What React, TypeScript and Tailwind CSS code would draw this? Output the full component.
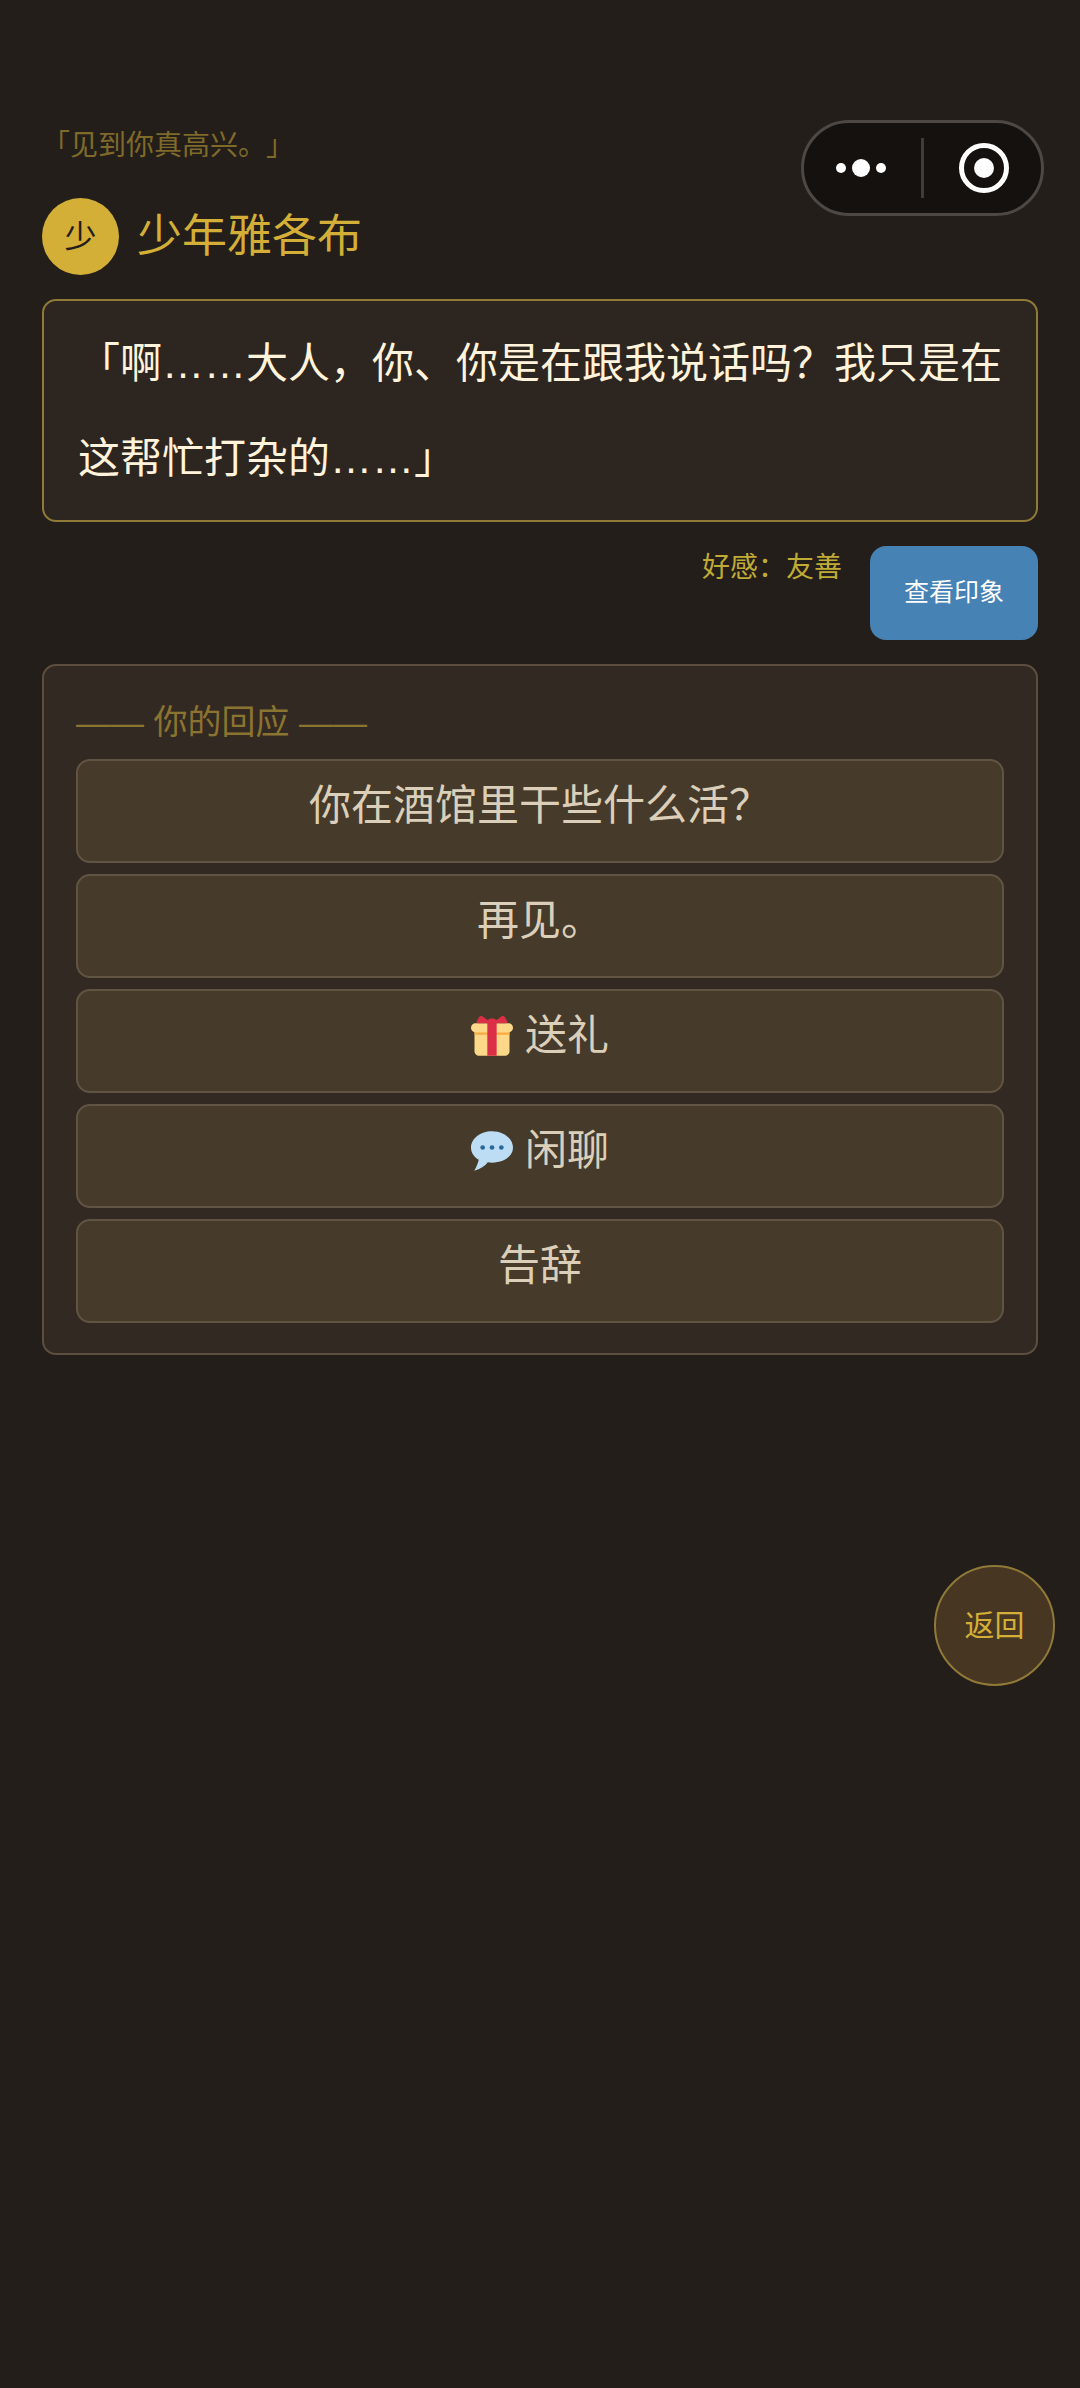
import React, { useState } from 'react';

interface Reply {
  id: string;
  label: string;
  icon?: React.ReactNode;
}

const GiftIcon: React.FC = () => (
  <svg viewBox="0 0 36 36" className="w-[42px] h-[42px]" aria-hidden="true">
    <path fill="#FDD888" d="M33 31c0 2.2-1.8 4-4 4H7c-2.2 0-4-1.8-4-4V14c0-2.2 1.8-4 4-4h22c2.2 0 4 1.8 4 4v17z" />
    <path fill="#FDD888" d="M36 11c0 2.2-1.8 4-4 4H4c-2.2 0-4-1.8-4-4s1.8-4 4-4h28c2.2 0 4 1.8 4 4z" />
    <path fill="#FCAB40" d="M3 15h30v2H3z" />
    <path fill="#DA2F47" d="M19 3h-2c-1.657 0-3 1.343-3 3v29h8V6c0-1.657-1.343-3-3-3z" />
    <path
      fill="#DA2F47"
      d="M16 7c1.1 0 1.263-.516.361-1.147L9.639 1.147c-.902-.631-2.085-.366-2.631.589L4.992 5.264C4.446 6.219 4.9 7 6 7h10zm4 0c-1.1 0-1.263-.516-.361-1.147l6.723-4.706c.901-.631 2.085-.366 2.631.589l2.016 3.527C31.554 6.219 31.1 7 30 7H20z"
    />
  </svg>
);

const ChatIcon: React.FC = () => (
  <svg viewBox="0 0 36 36" className="w-[42px] h-[42px]" aria-hidden="true">
    <path
      fill="#BDDDF4"
      d="M18 1C8.059 1 0 7.268 0 15c0 4.368 2.574 8.268 6.604 10.6C6.1 28.144 4.859 31.569 2.8 35c5.2-1.2 9.2-4.2 11.6-7.3 1.2.2 2.4.3 3.6.3 9.941 0 18-5.268 18-13S27.941 1 18 1" />
    <circle cx="10" cy="15" r="2" fill="#2A6797" />
    <circle cx="18" cy="15" r="2" fill="#2A6797" />
    <circle cx="26" cy="15" r="2" fill="#2A6797" />
  </svg>
);

const replies: Reply[] = [
  { id: 'work', label: '你在酒馆里干些什么活？' },
  { id: 'bye', label: '再见。' },
  { id: 'gift', label: '送礼', icon: <GiftIcon /> },
  { id: 'chat', label: '闲聊', icon: <ChatIcon /> },
  { id: 'leave', label: '告辞' },
];

// Mini-program capsule in the top right corner
const Capsule: React.FC = () => (
  <div className="absolute top-[120px] right-9 flex items-center rounded-full border-[3px] border-[#4d4843] bg-[#15110e]">
    <button type="button" aria-label="更多">
      <svg viewBox="0 0 117 90" className="block w-[117px] h-[90px] fill-white">
        <circle cx="37" cy="45" r="5" />
        <circle cx="57" cy="45" r="9" />
        <circle cx="77" cy="45" r="5" />
      </svg>
    </button>
    <span className="w-[3px] h-[60px] bg-[#403c38]" />
    <button type="button" aria-label="关闭">
      <svg viewBox="0 0 117 90" className="block w-[117px] h-[90px]">
        <circle cx="60" cy="45" r="22.5" fill="none" stroke="white" strokeWidth="5" />
        <circle cx="60" cy="45" r="10" fill="white" />
      </svg>
    </button>
  </div>
);

export default function App() {
  const [selected, setSelected] = useState<string | null>(null);

  return (
    <div className="relative min-h-screen bg-[#231e1a] px-[42px] pt-[126px] font-['Liberation_Sans','Noto_Sans_CJK_SC',sans-serif] [text-spacing-trim:space-all]">
      <Capsule />

      <p className="text-[28px] leading-10 text-[#7f6a2a]">「见到你真高兴。」</p>

      {/* Speaker */}
      <header className="mt-8 flex items-center gap-[18px]">
        <div className="flex size-[77px] items-center justify-center rounded-full bg-[#d4af37] text-[32px] leading-none text-[#231e1a]">
          少
        </div>
        <h1 className="text-[45px] leading-[60px] text-[#d4af37]">少年雅各布</h1>
      </header>

      <section className="mt-6 rounded-[14px] border-2 border-[#8f7a38] bg-[#2d251f] pt-[15px] pr-[30px] pb-[14px] pl-[34px]">
        <p className="text-[42px] leading-[95px] text-[#fff3dc]">
          「啊……大人，你、你是在跟我说话吗？我只是在这帮忙打杂的……」
        </p>
      </section>

      <div className="mt-6 flex items-start justify-end gap-7">
        <span className="text-[28px] leading-[44px] text-[#c0ac35]">好感：友善</span>
        <button type="button" className="h-[94px] rounded-2xl bg-[#4682b4] px-[34px] text-[25px] text-white">
          查看印象
        </button>
      </div>

      {/* Replies */}
      <section className="mt-6 rounded-[14px] border-2 border-[#5c4f40] bg-[#322923] px-8 pt-8 pb-[30px]">
        <h2 className="text-[34px] leading-[48px] text-[#8b7330]">—— 你的回应 ——</h2>
        <div className="mt-[13px] flex flex-col gap-[11px]">
          {replies.map((reply) => (
            <button
              key={reply.id}
              type="button"
              aria-pressed={selected === reply.id}
              onClick={() => setSelected(reply.id)}
              className="flex h-[104px] items-center justify-center gap-3 rounded-[14px] border-2 border-[#625443] bg-[#463a2b] pb-[10px] text-[42px] leading-[60px] text-[#dccfb9]"
            >
              {reply.icon}
              {reply.label}
            </button>
          ))}
        </div>
      </section>

      <button
        type="button"
        className="fixed right-[25px] bottom-[702px] size-[121px] rounded-full border-2 border-[#8f7a38] bg-[#463622] text-[30px] text-[#d4af37]"
      >
        返回
      </button>
    </div>
  );
}
